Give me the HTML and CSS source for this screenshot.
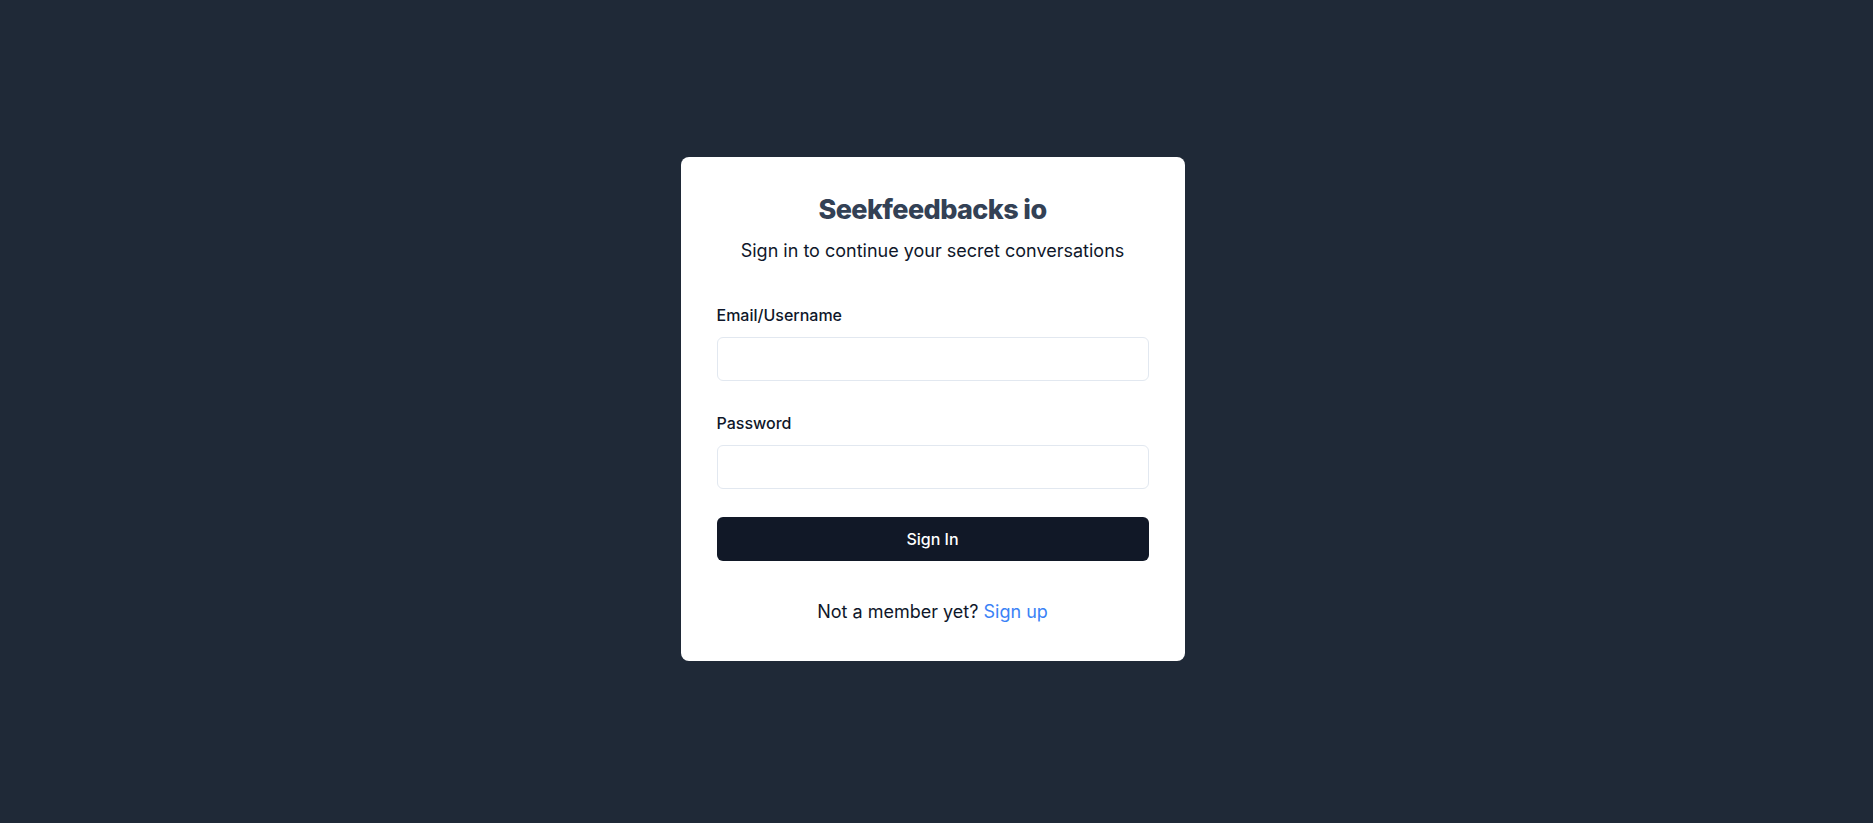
FILE: index.html
```html
<!DOCTYPE html>
<html lang="en">
<head>
    <meta charset="UTF-8">
    <meta name="viewport" content="width=device-width, initial-scale=1.0">
    <title>Sign In - Seekfeedbacks io</title>
    <link rel="stylesheet" href="styles.css">
</head>
<body>
    <main class="page">
        <div class="card">
            <h1 class="title">Seekfeedbacks io</h1>
            <p class="subtitle">Sign in to continue your secret conversations</p>

            <form class="form">
                <div class="field">
                    <label for="identifier">Email/Username</label>
                    <input type="text" id="identifier" name="identifier">
                </div>
                <div class="field">
                    <label for="password">Password</label>
                    <input type="password" id="password" name="password">
                </div>
                <button type="submit" class="submit">Sign In</button>
            </form>

            <p class="footer">Not a member yet? <a href="#">Sign up</a></p>
        </div>
    </main>
</body>
</html>
```

FILE: styles.css
```css
* {
    box-sizing: border-box;
}
body {
    margin: 0;
    font-family: Inter, "Noto Sans", sans-serif;
    background-color: #1f2937;
    color: #0f172a;
}
.page {
    min-height: 100vh;
    display: flex;
    align-items: center;
    justify-content: center;
    padding: 0 8px 5px 0;
}
.card {
    width: 504px;
    background-color: #ffffff;
    border-radius: 8px;
    padding: 36px 36px 35px;
    text-align: center;
}
.title {
    margin: 0;
    font-size: 27px;
    line-height: 34px;
    font-weight: 800;
    letter-spacing: -0.6px;
    color: #334155;
}
.subtitle {
    margin: 10px 0 0;
    font-size: 18px;
    line-height: 28px;
}
.form {
    margin-top: 40px;
    text-align: left;
}
.field {
    display: flex;
    flex-direction: column;
    gap: 12px;
    margin-bottom: 32px;
}
.field:nth-child(2) {
    margin-bottom: 28px;
}
label {
    font-size: 16px;
    line-height: 20px;
    font-weight: 500;
    color: #0f172a;
}
input {
    height: 44px;
    width: 100%;
    border: 1px solid #e2e8f0;
    border-radius: 6px;
    padding: 0 12px;
    font: inherit;
    font-size: 16px;
}
.submit {
    display: block;
    width: 100%;
    height: 44px;
    border: none;
    border-radius: 6px;
    background-color: #111827;
    color: #ffffff;
    font-family: inherit;
    font-size: 16px;
    font-weight: 500;
    cursor: pointer;
}
.footer {
    margin: 37px 0 0;
    font-size: 18px;
    line-height: 28px;
}
.footer a {
    color: #3b82f6;
    text-decoration: none;
}
```
